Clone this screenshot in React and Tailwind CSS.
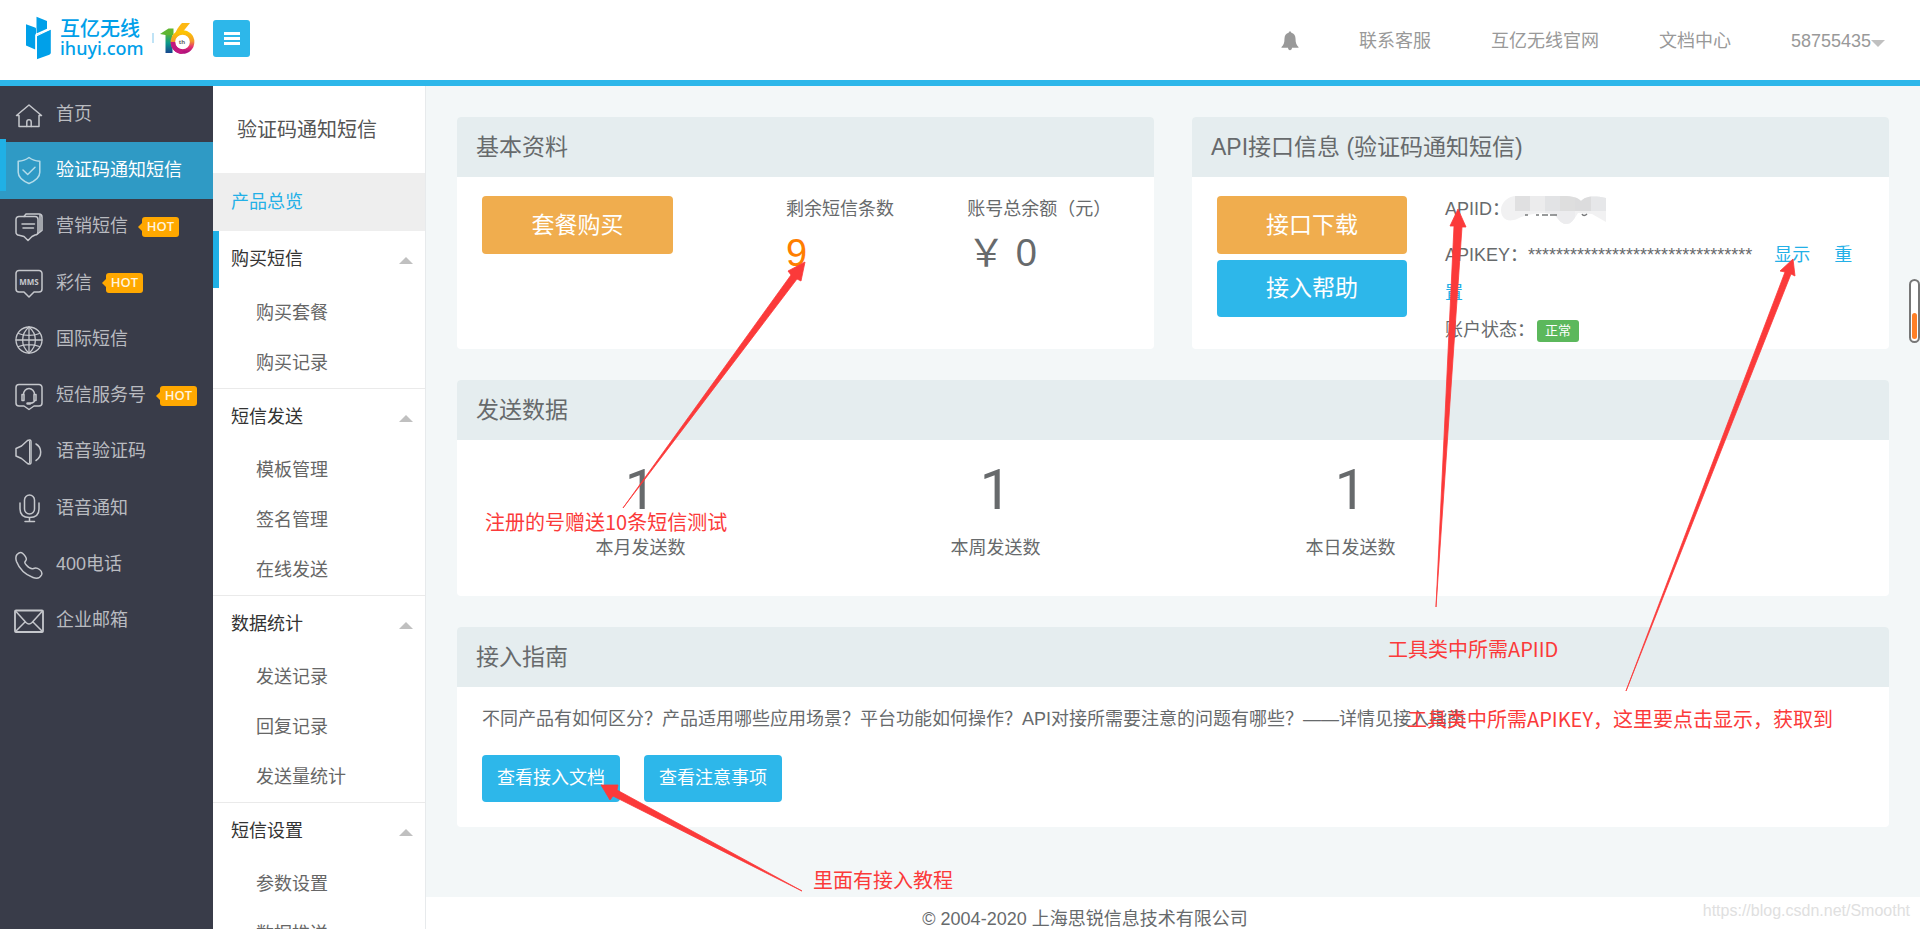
import React from "react";

const iconProps = {
  width: 30,
  height: 30,
  viewBox: "0 0 30 30",
  fill: "none",
  stroke: "currentColor",
  strokeWidth: 1.5,
  strokeLinecap: "round",
  strokeLinejoin: "round",
  "aria-hidden": true,
};

const HomeIcon = () => (
  <svg {...iconProps}>
    <path d="M2.5 16.5 15 6l12.5 10.5H25V27.500H5V16.500Z" />
    <path d="M12.800 27.500V23a2.200 2.200 0 0 1 4.400 0v4.500" />
  </svg>
);
const ShieldIcon = () => (
  <svg {...iconProps}>
    <path d="M15 2.500c3 2.300 6.800 3.500 10.800 3.700v11c0 4.800-4.600 8.600-10.800 11.300C8.800 25.800 4.200 22 4.200 17.200v-11C8.200 6 12 4.800 15 2.500Z" />
    <path d="m9 15 4.700 4.500 7.300-7.300" />
  </svg>
);
const MessageIcon = () => (
  <svg {...iconProps}>
    <path d="M5.500 4.500h15.500a3 3 0 0 1 3 3V20a3 3 0 0 1-3 3l-3 1.500-4 4-4-4L5 23.300A3 3 0 0 1 2 20V7.500a3 3 0 0 1 3.500-3Z" />
    <path d="M10 4.500 12 2h13a3 3 0 0 1 3 3v13.500l-4 3" />
    <path d="M26 3.500v16" />
    <path d="M8 12h12.500M9 16h10.500" />
  </svg>
);
const MmsIcon = () => (
  <svg {...iconProps}>
    <path d="M5 2.500h20a3 3 0 0 1 3 3V21a3 3 0 0 1-3 3h-5l-5 5-5-5H5a3 3 0 0 1-3-3V5.500a3 3 0 0 1 3-3Z" />
    <text
      x="15"
      y="16.500"
      textAnchor="middle"
      fontSize="8"
      fontWeight="700"
      fontFamily="Open Sans, sans-serif"
      fill="currentColor"
      stroke="none"
    >
      MMS
    </text>
  </svg>
);
const GlobeIcon = () => (
  <svg {...iconProps} strokeWidth={1.3}>
    <circle cx="15" cy="16" r="13" />
    <path d="M2 16h26M15 3v26M4.500 9.500c6 2.600 15 2.600 21 0M4.500 22.500c6-2.600 15-2.600 21 0" />
    <path d="M15 3c-8.500 7-8.500 19 0 26M15 3c8.500 7 8.500 19 0 26" />
  </svg>
);
const HeadsetIcon = () => (
  <svg {...iconProps}>
    <path d="M5 3.500h20a3 3 0 0 1 3 3V22a3 3 0 0 1-3 3h-5l-5 3.500-5-3.500H5a3 3 0 0 1-3-3V6.500a3 3 0 0 1 3-3Z" />
    <path d="M9.500 13.500a5.500 6 0 0 1 11 0M9.500 13.500H8v6h2v-6M20.500 13.500H22v6h-2v-6M20.500 20c-.5 1.500-2 2-4 2.200" />
    <path d="M13.500 22.500h2.500" strokeWidth="2.500" />
  </svg>
);
const SpeakerIcon = () => (
  <svg {...iconProps}>
    <path d="M2 11.500 7.500 9l6-5.500c2-1 3.500-.5 3.500 1v21c0 1.500-1.500 2-3.500 1l-6-5L2 19Z" />
    <path d="M15.500 4v22" strokeWidth="1" />
    <path d="M22 7c6 3.500 6.500 12.500 0 16.500" />
  </svg>
);
const MicIcon = () => (
  <svg {...iconProps}>
    <rect x="10.500" y="2" width="10" height="19" rx="5" />
    <path d="M6 10v6c0 5.500 3.500 8.500 9.500 8.500s9.500-3 9.500-8.500v-6M15.500 24.500V28.500M11 28.500h9.500" />
  </svg>
);
const PhoneIcon = () => (
  <svg {...iconProps}>
    <path d="M3 4.500C5 2.500 7 1.800 8.500 3.200c2.500 2.300 4.500 5.300 3.500 7-1.800 2.300-1.500 2.800.5 5s4.500 4.300 7 3.300c2-1 4-.5 6 1s3 3.200 2 5.500c-1.500 3-5 3.800-8.500 2.500C11 24.500 5 18 2.500 11.500 1.500 8.500 1.500 6.500 3 4.500Z" />
  </svg>
);
const MailIcon = () => (
  <svg {...iconProps}>
    <rect x="1" y="4.500" width="28" height="21.500" rx="1" strokeWidth="1.800" />
    <path d="m1.500 5 10.500 11.500c2 2 4 2 6 0L28.500 5M1.500 25.500l9.500-9.500M28.500 25.500 19 16" />
  </svg>
);

const navItems = [
  { label: "首页", Icon: HomeIcon },
  { label: "验证码通知短信", Icon: ShieldIcon, active: true },
  { label: "营销短信", Icon: MessageIcon, hot: true },
  { label: "彩信", Icon: MmsIcon, hot: true },
  { label: "国际短信", Icon: GlobeIcon },
  { label: "短信服务号", Icon: HeadsetIcon, hot: true },
  { label: "语音验证码", Icon: SpeakerIcon },
  { label: "语音通知", Icon: MicIcon },
  { label: "400电话", Icon: PhoneIcon },
  { label: "企业邮箱", Icon: MailIcon },
];

const menuGroups = [
  { title: "购买短信", items: ["购买套餐", "购买记录"], current: true },
  { title: "短信发送", items: ["模板管理", "签名管理", "在线发送"] },
  { title: "数据统计", items: ["发送记录", "回复记录", "发送量统计"] },
  { title: "短信设置", items: ["参数设置", "数据推送"] },
];

const Logo = () => (
  <a href="#home" className="flex items-center" aria-label="互亿无线 ihuyi.com">
    <svg width="27" height="44" viewBox="0 0 27 44" fill="#00a0e9" aria-hidden="true">
      <path d="M11.500.8 22 5v7.800l-9.500 4.200-1 .2Z" />
      <path d="m1 8.200 9 3.400c.8.300 1 .8 1 1.500v4.500l-.8 1.400V33.500L1 29.500Z" />
      <path d="M25.800 13.500V36.500c0 1-.5 1.700-1.500 2.200L11.800 43.300V20.500c0-1 .4-1.500 1.300-1.900Z" />
      <path d="M11.400 19.500V43M11.600 19.800 25.800 13" stroke="#fff" strokeWidth="1.200" fill="none" />
    </svg>
    <span className="ml-2 flex flex-col text-[#00a0e9]">
      <span className="text-[20px] leading-[20px] font-medium">互亿无线</span>
      <span className="font-['Noto_Sans'] text-[18px] leading-[18px] font-medium">ihuyi.com</span>
    </span>
    <span className="ml-2 h-2.5 w-0.5 bg-[#bfe3f6]" />
    <svg className="ml-1.5" width="35" height="33" viewBox="0 0 35 33" fill="none" aria-hidden="true">
      <defs>
        <linearGradient id="ring" x1="0" y1="0" x2="0" y2="1">
          <stop offset="0" stopColor="#fdc400" />
          <stop offset=".45" stopColor="#f39a2b" />
          <stop offset=".75" stopColor="#e5336f" />
          <stop offset="1" stopColor="#b3127c" />
        </linearGradient>
        <linearGradient id="stem" x1="0" y1="0" x2="0" y2="1">
          <stop offset="0" stopColor="#5fb531" />
          <stop offset=".5" stopColor="#0b9a8c" />
          <stop offset="1" stopColor="#17468f" />
        </linearGradient>
      </defs>
      <path d="M5.500 11h7v20h-7Z" fill="url(#stem)" />
      <path d="m0 12 8.500-5.500h5V13H5.500Z" fill="#5fb531" />
      <path d="M22 1h8l-8.500 10.500-8 6C14 12 17.500 5.500 22 1Z" fill="#fdb813" />
      <circle cx="22.500" cy="20" r="9.600" stroke="url(#ring)" strokeWidth="4.500" />
      <path d="M12.900 20a9.600 9.600 0 0 0 9.600 9.600" stroke="#c2187f" strokeWidth="4.500" />
      <text x="22" y="22" textAnchor="middle" fontSize="6" fontWeight="700" fontFamily="Open Sans, sans-serif" fill="#666">
        th
      </text>
    </svg>
  </a>
);

const Hot = () => (
  <span className="relative ml-3.5 flex h-5 w-[37px] items-center justify-center rounded-[3px] bg-[#ffa800] font-['Open_Sans'] text-[13px] font-semibold text-[#fff3dc]">
    <span className="absolute top-1.5 -left-1 border-y-4 border-r-4 border-y-transparent border-r-[#ffa800]" />
    HOT
  </span>
);

const Panel = ({ title, className = "", children }) => (
  <section className="overflow-hidden rounded bg-white">
    <h2 className="flex h-[60px] items-center bg-[#e5edef] px-[19px] text-[23px]">{title}</h2>
    <div className={className}>{children}</div>
  </section>
);

const Stat = ({ value, label }) => (
  <div className="flex flex-col items-center">
    <span className="font-['Roboto'] text-[56px] leading-[56px]">{value}</span>
    <span className="mt-4 leading-7">{label}</span>
  </div>
);

const arrows = [
  "623,508 791,275 788,271 805,262 801,281 797,279",
  "1436,607 1454,226 1450,226 1458,209 1466,227 1462,227",
  "1626,691 1785,272 1780,271 1793,259 1795,276 1791,274",
  "802,891 613,796 610,800 601,785 618,785 617,790",
];

const Annotations = () => (
  <div className="pointer-events-none absolute inset-0 overflow-hidden font-['Noto_Sans_CJK_SC',sans-serif] text-[20px] leading-7 whitespace-nowrap text-[#fb3a3a]">
    <svg className="absolute top-0 left-0" width="1920" height="929" viewBox="0 0 1920 929" fill="#fb3a3a" aria-hidden="true">
      {arrows.map((points) => (
        <polygon key={points} points={points} stroke="#fb3a3a" strokeWidth=".8" />
      ))}
    </svg>
    <span className="absolute top-[508px] left-[485px]">注册的号赠送10条短信测试</span>
    <span className="absolute top-[635px] left-[1388px]">工具类中所需APIID</span>
    <span className="absolute top-[705px] left-[1407px]">工具类中所需APIKEY，这里要点击显示，获取到</span>
    <span className="absolute top-[866px] left-[813px]">里面有接入教程</span>
  </div>
);

export default function App() {
  return (
    <div className="relative flex h-screen flex-col overflow-hidden bg-white font-['Liberation_Sans','Noto_Sans_CJK_SC',sans-serif] text-[18px] text-[#676a6c]">
      <header className="flex h-[86px] shrink-0 items-start border-b-[6px] border-[#2db7ea]">
        <div className="flex w-[213px] shrink-0 pt-4 pl-[25px]">
          <Logo />
        </div>
        <button
          type="button"
          aria-label="切换菜单"
          className="mt-5 flex h-[37px] w-[37px] flex-col items-center justify-center gap-0.5 rounded-[3px] bg-[#2db7ea]"
        >
          <span className="h-[3px] w-4 bg-white" />
          <span className="h-[3px] w-4 bg-white" />
          <span className="h-[3px] w-4 bg-white" />
        </button>
        <nav className="ml-auto flex h-20 items-center gap-[60px] pt-0.5 pr-[35px] text-[#999]">
          <a href="#notice" aria-label="通知">
            <svg width="18" height="20" viewBox="0 0 18 20" fill="#999" aria-hidden="true">
              <path d="M9 .5c.9 0 1.300.5 1.300 1.300 2.700.6 4.200 2.700 4.200 5.700 0 4.500 1 6.500 3 8.500v.7H11c0 1.500-.9 2.500-2 2.500s-2-1-2-2.500H.5V16c2-2 3-4 3-8.500 0-3 1.500-5.100 4.200-5.700C7.700 1 8.100.5 9 .5Z" />
            </svg>
          </a>
          <a href="#service">联系客服</a>
          <a href="#site">互亿无线官网</a>
          <a href="#docs">文档中心</a>
          <button type="button" className="flex items-center">
            58755435
            <span className="mt-1 border-x-[7px] border-t-[7px] border-x-transparent border-t-[#c0c0c0]" />
          </button>
        </nav>
      </header>

      <div className="flex min-h-0 flex-1">
        <nav className="w-[213px] shrink-0 bg-[#393c49] text-[#b9bbc0]">
          <ul className="grid h-[563px] grid-rows-10">
            {navItems.map(({ label, Icon, active, hot }) => (
              <li key={label}>
                <a
                  href="#nav"
                  className={
                    active
                      ? "relative flex h-full items-center bg-[#2f9ac5] pl-3.5 text-white"
                      : "flex h-full items-center pl-3.5"
                  }
                >
                  {active && <span className="absolute -top-[3px] left-0 h-[52px] w-1.5 bg-[#20b0e5]" />}
                  <span className={active ? "text-[#b5dcea]" : "text-[#c5c7cc]"}>
                    <Icon />
                  </span>
                  <span className="ml-3">{label}</span>
                  {hot && <Hot />}
                </a>
              </li>
            ))}
          </ul>
        </nav>

        <aside className="w-[213px] shrink-0 overflow-hidden border-r border-[#e7eaec] bg-white">
          <h1 className="flex h-[87px] items-center pl-6 text-[20px] text-[#555]">验证码通知短信</h1>
          <a href="#overview" className="flex h-[58px] items-center bg-[#eee] pl-[18px] text-[#23b0e7]">
            产品总览
          </a>
          {menuGroups.map(({ title, items, current }) => (
            <div key={title} className="border-b border-[#eaeaea]">
              <button
                type="button"
                className={
                  current
                    ? "flex h-[57px] w-full items-center justify-between border-l-[6px] border-[#20b0e5] pr-3 pl-3 text-[#333]"
                    : "flex h-14 w-full items-center justify-between pr-3 pl-[18px] text-[#333]"
                }
              >
                {title}
                <span className="mt-0.5 border-x-[7px] border-b-[7px] border-x-transparent border-b-[#c0c0c0]" />
              </button>
              <ul>
                {items.map((item) => (
                  <li key={item}>
                    <a href="#menu" className="flex h-[50px] items-center pl-[43px] text-[#666]">
                      {item}
                    </a>
                  </li>
                ))}
              </ul>
            </div>
          ))}
        </aside>

        <main className="flex min-w-0 flex-1 flex-col bg-[#f3f7f8]">
          <div className="flex shrink-0 flex-col gap-[31px] px-[31px] pt-[31px] pb-[70px]">
            <div className="grid grid-cols-2 gap-[38px]">
              <Panel title="基本资料" className="grid grid-cols-[47fr_28fr_25fr] px-[25px] pt-[19px]">
                <div>
                  <button type="button" className="h-[58px] w-[191px] rounded bg-[#f0ad4e] text-[23px] text-white">
                    套餐购买
                  </button>
                </div>
                <div>
                  <p className="leading-[26px] whitespace-nowrap">剩余短信条数</p>
                  <p className="mt-2.5 text-[38px] leading-[42px] text-[#ff7e00]">9</p>
                </div>
                <div>
                  <p className="leading-[26px] whitespace-nowrap">账号总余额（元）</p>
                  <p className="mt-2.5 text-[38px] leading-[42px]">￥ 0</p>
                </div>
              </Panel>
              <Panel title="API接口信息 (验证码通知短信)" className="flex gap-[38px] px-[25px] pt-[19px]">
                <div className="flex shrink-0 flex-col gap-1.5">
                  <button type="button" className="h-[58px] w-[190px] rounded bg-[#f0ad4e] text-[23px] text-white">
                    接口下载
                  </button>
                  <button type="button" className="h-[57px] w-[190px] rounded bg-[#2db7ea] text-[23px] text-white">
                    接入帮助
                  </button>
                </div>
                <div className="min-w-0 flex-1">
                  <p className="relative leading-[26px]">
                    APIID：
                    <svg className="absolute top-0 left-14" width="105" height="28" viewBox="0 0 105 28" aria-hidden="true">
                      <clipPath id="smudge">
                        <path d="M0 14C0 6 8 0 15 0h45c8 0 15 0 20 5C84 1 90-1 105 2v24l-14-8-14-1c-4 6-6 11-12 11s-8-7-13-10l-8-1c-9 0-20 2-28 6C6 27 0 22 0 14Z" />
                      </clipPath>
                      <g clipPath="url(#smudge)">
                        <path d="M0 0h105v28H0Z" fill="#f1f1f2" />
                        <path d="M14 0h15v15H14Z" fill="#e0e0e1" />
                        <path d="M29 0h15v15H29Z" fill="#ececed" />
                        <path d="M44 0h15v15H44Z" fill="#e2e3e5" />
                        <path d="M59 0h15v15H59Z" fill="#dedede" />
                        <path d="M74 0h16v15H74Z" fill="#dcdcdd" />
                        <path d="M90 0h15v15H90Z" fill="#e6e7e9" />
                        <path d="M44 15h30v13H44Z" fill="#ececee" />
                      </g>
                      <path d="M24 19h3M35 19h3M41 19h6M49 19h7M81 18c1 2 3 2 5 0" stroke="#77797b" strokeWidth="1.500" fill="none" />
                    </svg>
                  </p>
                  <p className="mt-3.5 leading-[38px]">
                    APIKEY：********************************
                    <a href="#show" className="ml-[22px] text-[#23b0e7]">
                      显示
                    </a>
                    <a href="#reset" className="ml-6 text-[#23b0e7]">
                      重置
                    </a>
                  </p>
                  <p className="flex h-[37px] items-center">
                    账户状态：
                    <span className="ml-0.5 flex h-[22px] items-center rounded-[3px] bg-[#5cb85c] px-2 text-[13px] text-white">
                      正常
                    </span>
                  </p>
                </div>
              </Panel>
            </div>
            <Panel title="发送数据" className="grid grid-cols-4 px-1.5 pt-[22px] pb-[34px]">
              <Stat value="1" label="本月发送数" />
              <Stat value="1" label="本周发送数" />
              <Stat value="1" label="本日发送数" />
            </Panel>
            <Panel title="接入指南" className="px-[25px] pt-[18px] pb-[25px]">
              <p className="leading-7">
                不同产品有如何区分？产品适用哪些应用场景？平台功能如何操作？API对接所需要注意的问题有哪些？——详情见接入指南
              </p>
              <div className="mt-[22px] flex gap-6">
                <a href="#guide" className="flex h-[47px] items-center rounded bg-[#2db7ea] px-[15px] text-white">
                  查看接入文档
                </a>
                <a href="#notes" className="flex h-[47px] items-center rounded bg-[#2db7ea] px-[15px] text-white">
                  查看注意事项
                </a>
              </div>
            </Panel>
          </div>
          <footer className="flex-1 bg-white pt-2 pr-44 text-center leading-7">© 2004-2020 上海思锐信息技术有限公司</footer>
        </main>
      </div>

      <div className="absolute top-[279px] right-0 flex h-16 w-[11px] items-end rounded-full border-2 border-[#777] bg-white px-px pb-0.5">
        <span className="h-[26px] w-full rounded-full bg-[#ff7f27]" />
      </div>
      <Annotations />
      <span className="absolute right-2.5 bottom-1.5 text-[16px] leading-6 text-[#e0e0e0]">https://blog.csdn.net/Smootht</span>
    </div>
  );
}
